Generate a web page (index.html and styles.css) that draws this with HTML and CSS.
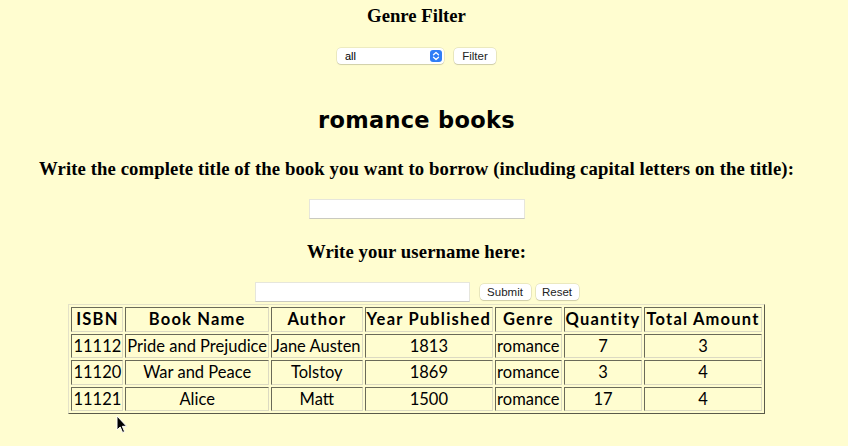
FILE: index.html
```html
<!DOCTYPE html>
<html lang="en">
<head>
<meta charset="utf-8">
<title>Genre Filter</title>
<link rel="stylesheet" href="styles.css">
</head>
<body>
<div class="page">
  <h3 class="title">Genre Filter</h3>
  <form class="filter-row">
    <div class="select">
      <span>all</span>
      <span class="arrows">
        <svg width="8" height="10" viewBox="0 0 8 10"><path d="M1.5 3.8 L4 1.5 L6.5 3.8 M1.5 6.2 L4 8.5 L6.5 6.2" fill="none" stroke="#fff" stroke-width="1.3" stroke-linecap="round" stroke-linejoin="round"/></svg>
      </span>
    </div>
    <button type="button" class="btn btn-filter">Filter</button>
  </form>

  <h2 class="genre">romance books</h2>

  <h3 class="prompt prompt-title">Write the complete title of the book you want to borrow (including capital letters on the title):</h3>
  <div class="field-row first">
    <input class="text-input" type="text">
  </div>

  <h3 class="prompt prompt-user">Write your username here:</h3>
  <div class="field-row second">
    <input class="text-input" type="text">
    <button type="button" class="btn btn-submit">Submit</button>
    <button type="button" class="btn btn-reset">Reset</button>
  </div>

  <table class="books">
    <tr>
      <th>ISBN</th><th>Book Name</th><th>Author</th><th>Year Published</th><th>Genre</th><th>Quantity</th><th>Total Amount</th>
    </tr>
    <tr>
      <td>11112</td><td>Pride and Prejudice</td><td>Jane Austen</td><td>1813</td><td>romance</td><td>7</td><td>3</td>
    </tr>
    <tr>
      <td>11120</td><td>War and Peace</td><td>Tolstoy</td><td>1869</td><td>romance</td><td>3</td><td>4</td>
    </tr>
    <tr>
      <td>11121</td><td>Alice</td><td>Matt</td><td>1500</td><td>romance</td><td>17</td><td>4</td>
    </tr>
  </table>

  <svg class="cursor" width="12" height="19" viewBox="0 0 12 19"><path d="M1 1 L1 15 L4.2 12 L6.6 17.5 L8.6 16.6 L6.3 11.3 L10.6 11.3 Z" fill="#000" stroke="#fff" stroke-width="1" stroke-linejoin="round"/></svg>
</div>
</body>
</html>
```

FILE: styles.css
```css
* { box-sizing: border-box; }

html, body {
  margin: 0;
  padding: 0;
  background: #FFFDD0;
}

body {
  font-family: "Liberation Serif", "Times New Roman", serif;
  color: #000;
}

.page {
  position: relative;
  width: 833px;
  height: 446px;
  text-align: center;
}

.title {
  font-size: 18.72px;
  font-weight: bold;
  line-height: 22px;
  margin: 5px 0 0;
}

.filter-row {
  display: flex;
  justify-content: center;
  gap: 10px;
  margin: 21px 0 0;
  height: 16px;
}

.select {
  width: 107px;
  height: 16px;
  background: #fff;
  border-radius: 4px;
  box-shadow: 0 0 0 0.5px rgba(0, 0, 0, 0.14), 0 1px 1px rgba(0, 0, 0, 0.12);
  display: flex;
  align-items: center;
  justify-content: space-between;
  padding: 0 2px 0 8px;
  font: 11px "Liberation Sans", Arial, sans-serif;
}

.arrows {
  width: 12px;
  height: 12px;
  background: #2f7df6;
  border-radius: 3px;
  display: flex;
  align-items: center;
  justify-content: center;
}

.btn {
  font: 11.5px "Liberation Sans", Arial, sans-serif;
  color: #222;
  background: #fff;
  border: none;
  border-radius: 4px;
  box-shadow: 0 0 0 0.5px rgba(0, 0, 0, 0.16), 0 1px 1px rgba(0, 0, 0, 0.12);
  height: 16px;
  padding: 0;
  margin: 0;
  line-height: 16px;
}

.btn-filter { width: 42px; }
.btn-submit { width: 51px; margin-left: 10px; }
.btn-reset { width: 43px; margin-left: 5px; }

.genre {
  font-family: "DejaVu Sans", sans-serif;
  font-weight: bold;
  font-size: 22.5px;
  line-height: 26px;
  margin: 43px 0 0;
  letter-spacing: 0.3px;
}

.prompt {
  font-size: 18.72px;
  font-weight: bold;
  line-height: 22px;
  margin: 0;
  letter-spacing: 0.1px;
}

.prompt-title { margin-top: 25px; }
.prompt-user { margin-top: 22px; }

.field-row {
  display: flex;
  justify-content: center;
  align-items: center;
}

.field-row.first { margin-top: 19px; }
.field-row.second { margin-top: 19px; }

.text-input {
  width: 216px;
  height: 20px;
  background: #fff;
  border: 1px solid #e6e6dc;
  border-bottom-color: #c9c9c0;
  margin: 0;
  padding: 0;
}

.field-row.second .text-input { width: 215px; }

.books {
  margin: 2px auto 0;
  border-collapse: separate;
  border-spacing: 2px;
  border: 1px solid;
  border-color: #e4e2c8 #5a5a4a #5a5a4a #e4e2c8;
  font-family: "Lato", "DejaVu Sans", sans-serif;
  font-size: 16.5px;
}

.books th,
.books td {
  border: 1px solid;
  border-color: #6a6a58 #dcdac2 #dcdac2 #6a6a58;
  padding: 1px;
  line-height: 20.5px;
  text-align: center;
  white-space: nowrap;
}

.books th {
  font-weight: bold;
  letter-spacing: 1.2px;
}

.books td { font-weight: normal; }

.cursor {
  position: absolute;
  left: 116px;
  top: 410px;
}
```
